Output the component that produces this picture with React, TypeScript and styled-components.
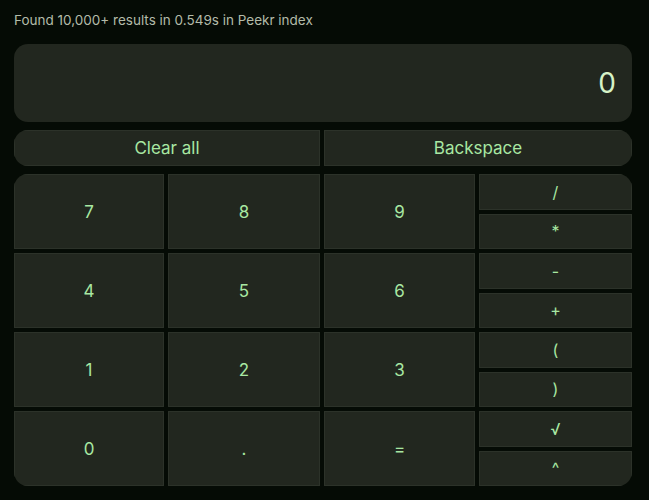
import styled, { createGlobalStyle } from "styled-components";

const GlobalStyle = createGlobalStyle`
  body {
    margin: 0;
    background: #050b05;
    font-family: Inter, "Noto Sans", sans-serif;
  }
`;

const StyledPage = styled.div`
  display: flex;
  flex-direction: column;
  padding: 10px 17px 0 14px;
`;

const StyledInfo = styled.div`
  font-size: 13.5px;
  line-height: 20px;
  color: #b3bba9;
  margin-bottom: 14px;
`;

const StyledDisplay = styled.div`
  height: 78px;
  border-radius: 14px;
  background: #22271f;
  display: flex;
  align-items: center;
  justify-content: flex-end;
  padding: 0 16px;
  box-sizing: border-box;
  font-size: 28px;
  color: #d6f2c6;
`;

const StyledActions = styled.div`
  margin-top: 8px;
  display: grid;
  grid-template-columns: 306px 1fr;
  gap: 4px;
  height: 36px;
  border-radius: 14px;
  overflow: hidden;
`;

const StyledKey = styled.button<{ $size?: number }>`
  border: 1px solid #2c3229;
  background: #22271f;
  color: #a8e8a2;
  font-family: Inter, "Noto Sans", sans-serif;
  font-size: ${(p) => p.$size ?? 17}px;
  display: flex;
  align-items: center;
  justify-content: center;
  padding: 0;
  cursor: pointer;
  min-height: 0;
`;

const StyledPad = styled.div`
  margin-top: 8px;
  display: grid;
  grid-template-columns: 150px 152px 151px 1fr;
  grid-template-rows: repeat(4, 75px);
  gap: 4px;
  border-radius: 14px;
  overflow: hidden;
`;

const StyledPair = styled.div`
  display: grid;
  grid-template-rows: 1fr 1fr;
  gap: 4px;
`;

const rows = [
  ["7", "8", "9", "/", "*"],
  ["4", "5", "6", "-", "+"],
  ["1", "2", "3", "(", ")"],
  ["0", ".", "=", "√", "^"],
];

export default function App() {
  return (
    <>
      <GlobalStyle />
      <StyledPage>
        <StyledInfo>Found 10,000+ results in 0.549s in Peekr index</StyledInfo>
        <StyledDisplay>0</StyledDisplay>
        <StyledActions>
          <StyledKey>Clear all</StyledKey>
          <StyledKey>Backspace</StyledKey>
        </StyledActions>
        <StyledPad>
          {rows.map((r) => [
            <StyledKey key={r[0]}>{r[0]}</StyledKey>,
            <StyledKey key={r[1]}>{r[1]}</StyledKey>,
            <StyledKey key={r[2]}>{r[2]}</StyledKey>,
            <StyledPair key={r[3] + r[4]}>
              <StyledKey $size={16}>{r[3]}</StyledKey>
              <StyledKey $size={16}>{r[4]}</StyledKey>
            </StyledPair>,
          ])}
        </StyledPad>
      </StyledPage>
    </>
  );
}
